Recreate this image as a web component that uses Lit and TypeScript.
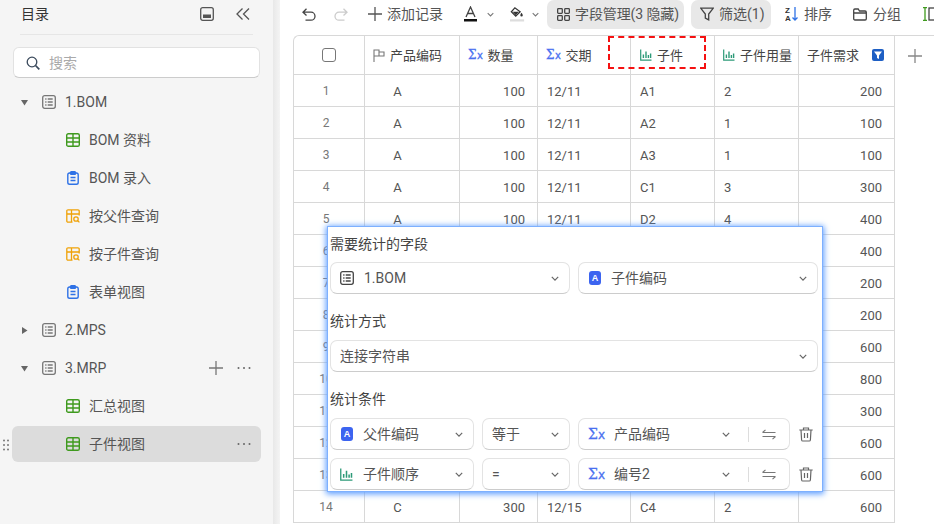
import { LitElement, html, css, nothing } from "lit";
import { customElement } from "lit/decorators.js";

const chev = html`<svg class="chev" width="8" height="5" viewBox="0 0 10 6"><path d="M1 1 5 5l4-4" fill="none" stroke="#666" stroke-width="1.500"/></svg>`;
const listIcon = (c = "#777") => html`<svg width="14" height="14" viewBox="0 0 14 14" fill="none" stroke=${c} stroke-width="1.300"><rect x=".7" y=".7" width="12.600" height="12.600" rx="2"/><path d="M3.200 4h1.300M5.700 4h5M3.200 7h1.300M5.700 7h5M3.200 10h1.300M5.700 10h5"/></svg>`;
const gridIcon = html`<svg width="14" height="14" viewBox="0 0 14 14" fill="none" stroke="#3f9a1e" stroke-width="1.400"><rect x=".7" y=".7" width="12.600" height="12.600" rx="1.600"/><path d="M.7 5h12.600M.7 9h12.600M7 .7v12.600"/></svg>`;
const clipIcon = html`<svg width="14" height="14" viewBox="0 0 14 14" fill="none" stroke="#2f72e6" stroke-width="1.400"><rect x="1.800" y="2" width="10.400" height="11.300" rx="1.800"/><rect x="4.500" y=".8" width="5" height="2.400" rx=".8" fill="#2f72e6"/><path d="M4.500 6.500h5M4.500 9.500h5"/></svg>`;
const queryIcon = html`<svg width="14" height="14" viewBox="0 0 14 14" fill="none" stroke="#efa208" stroke-width="1.300"><path d="M6.500 13.200H2A1.200 1.200 0 0 1 .8 12V2A1.200 1.200 0 0 1 2 .8h10A1.200 1.200 0 0 1 13.200 2v4.500M.8 5h12.400M5.500 .8v12.400"/><circle cx="10" cy="10" r="2.200"/><path d="m11.600 11.600 1.800 1.800"/></svg>`;
const sigma = html`<span class="sigma">Σ<i>x</i></span>`;
const barIcon = (s = 12) => html`<svg width=${s} height=${s} viewBox="0 0 12 12" fill="none" stroke="#2d9a78" stroke-width="1.200"><path d="M.7 .5v10.700h10.800"/><path d="M3.400 9V5.500M6 9V2.500M8.400 9V6M10.600 9V4.500" stroke-width="1.400"/></svg>`;
const aIcon = html`<span class="a-icon">A</span>`;
const trash = html`<svg width="14" height="15" viewBox="0 0 14 15" fill="none" stroke="#666" stroke-width="1.200"><path d="M.3 3h13.400M4.500 3V1h5v2M2 3l.6 10a1.200 1.200 0 0 0 1.200 1h6.400a1.200 1.200 0 0 0 1.200-1L12 3M5.500 6v5M8.500 6v5"/></svg>`;
const swap = html`<svg width="14" height="11" viewBox="0 0 14 11" fill="none" stroke="#777" stroke-width="1.100"><path d="M.5 3.500h13M.5 3.500 3.500.8M13.500 7.500H.5M13.500 7.500l-3 2.700"/></svg>`;
const dots = html`<svg width="14" height="4" viewBox="0 0 14 4" fill="#666"><circle cx="1.500" cy="2" r="1"/><circle cx="7" cy="2" r="1"/><circle cx="12.500" cy="2" r="1"/></svg>`;

const rows: [string, string, string, string, string, string, string][] = [
  ["1", "A", "100", "12/11", "A1", "2", "200"],
  ["2", "A", "100", "12/11", "A2", "1", "100"],
  ["3", "A", "100", "12/11", "A3", "1", "100"],
  ["4", "A", "100", "12/11", "C1", "3", "300"],
  ["5", "A", "100", "12/11", "D2", "4", "400"],
  ["6", "B", "200", "12/13", "A1", "2", "400"],
  ["7", "B", "200", "12/13", "A2", "1", "200"],
  ["8", "B", "200", "12/13", "B1", "1", "200"],
  ["9", "B", "200", "12/13", "B2", "3", "600"],
  ["10", "B", "200", "12/13", "C1", "4", "800"],
  ["11", "C", "300", "12/15", "C2", "1", "300"],
  ["12", "C", "300", "12/15", "C3", "2", "600"],
  ["13", "C", "300", "12/15", "D1", "2", "600"],
  ["14", "C", "300", "12/15", "C4", "2", "600"],
];

const ascii = (s: string) => /^[\x00-\x7f]+$/.test(s);

@customElement("app-root")
export class AppRoot extends LitElement {
  static styles = css`
    :host { display: flex; width: 934px; height: 524px; overflow: hidden; position: relative; background: #fff;
      font: 14px Roboto, "Noto Sans CJK SC", sans-serif; color: #444; }
    svg { display: block; flex: none; }
    .up { padding-bottom: 2px; }
    .side { width: 273px; flex: none; background: #f5f5f5; box-sizing: border-box; }
    .strip { width: 7px; flex: none; background: linear-gradient(90deg, #e8e8e8, #f4f4f4); margin-right: 13px; }
    .side-head { display: flex; align-items: center; margin: 0 20px; border-bottom: 1px solid #e6e6e6; color: #333; padding-left: 1px; padding-bottom: 6px; box-sizing: border-box; height: 35px; }
    .side-head .t { flex: 1; }
    .gap36 { width: 22px; }
    .search { margin: 12px 13px 6px; height: 31px; background: #fff; border: 1px solid #e2e2e2; border-bottom-color: #ccc; border-radius: 6px; display: flex; align-items: center; gap: 9px; padding-left: 12px; box-sizing: border-box; color: #aaa; }
    .tree { display: flex; flex-direction: column; gap: 2px; margin: 0 12px; position: relative; }
    .node { height: 36px; display: flex; align-items: center; border-radius: 6px; padding-right: 10px; color: #555; }
    .node.active { background: #dcdcdc; }
    .arrow { width: 30px; display: flex; padding-left: 9px; box-sizing: border-box; flex: none; }
    .node.l2 { padding-left: 54px; }
    .node .lbl { margin-left: 9px; flex: 1; }
    .node svg + svg { margin-left: 14px; }
    .grip { position: absolute; left: -9px; bottom: 11px; }

    .main { flex: 1; min-width: 0; display: flex; flex-direction: column; }
    .tools { height: 28px; margin-bottom: 7px; display: flex; align-items: center; white-space: nowrap; color: #555; }
    .tool { display: flex; align-items: center; gap: 5px; flex: none; }
    .pill { height: 29px; background: #e8e8e8; border-radius: 7px; box-sizing: border-box; }
    .p1 { padding: 0 6px 0 10px; gap: 5px; margin-left: 8px; width: 137px; letter-spacing: -.1px; }
    .p2 { padding: 0 8px 0 9px; margin-left: 7px; width: 80px; }

    .table { display: grid; grid-template-columns: 71px 95px 78px 93px 84px 84px 96px 39px; border-left: 1px solid #d8d8d8; border-top: 1px solid #d8d8d8; border-top-left-radius: 6px; width: 641px; font-size: 13px; }
    .c { height: 32px; box-sizing: border-box; border-right: 1px solid #d8d8d8; border-bottom: 1px solid #d8d8d8; display: flex; align-items: center; padding: 2px 9px 0; color: #555; white-space: nowrap; }
    .h { height: 39px; color: #444; padding: 0 0 0 8px; gap: 5px; }
    .c.num { justify-content: flex-end; padding-right: 12px; }
    .c.idx { justify-content: center; color: #777; font-size: 12px; padding: 0 6px 0 0; }
    .c.mid { justify-content: center; padding-right: 38px; }
    .h.box { justify-content: center; padding: 0; }
    .h.last { border-right: 0; border-bottom: 0; justify-content: center; padding: 0; }
    .blank { height: 32px; }
    .check { width: 12px; height: 12px; border: 1px solid #777; border-radius: 3px; }
    .sigma { color: #4a70f0; font-family: "DejaVu Serif", serif; font-size: 12px; display: inline-flex; align-items: baseline; letter-spacing: -.5px; line-height: 1; flex: none; -webkit-text-stroke: .3px #4a70f0; }
    .sigma i { font-style: normal; font-size: 10px; font-family: "DejaVu Sans", sans-serif; margin-left: 1px; }
    .fbadge { width: 12px; height: 12px; background: #1e5fc4; border-radius: 2px; display: flex; align-items: center; justify-content: center; margin-left: 8px; }
    .a-icon { width: 12px; height: 14px; margin-left: 1px; background: #3c64f0; color: #fff; border-radius: 3px; font: 700 9px "Liberation Sans", sans-serif; display: inline-flex; align-items: center; justify-content: center; flex: none; }

    .dash { position: absolute; left: 608px; top: 36px; width: 98px; height: 33px; box-sizing: border-box; border: 2px dashed #f51111; }
    .dlg { position: absolute; left: 328px; top: 227px; width: 494px; height: 264px; box-sizing: border-box; background: #fff; box-shadow: 0 0 0 1px #7db0ff, 0 1px 6px 2px #5c9dff; padding: 7px 4px 0 2px; color: #444; }
    .lab { height: 20px; line-height: 20px; }
    .sel { height: 32px; box-sizing: border-box; border: 1px solid #e3e3e3; border-bottom-color: #ccc; border-radius: 7px; display: flex; align-items: center; padding: 0 10px 0 9px; gap: 10px; min-width: 0; color: #555; }
    .sel .g { flex: 1; white-space: nowrap; }
    .sel .sigma { font-size: 14px; letter-spacing: -1px; }
    .sel .sigma i { font-size: 12px; }
    .sel.wide { padding-right: 13px; }
    .sel.wide .sep { width: 1px; height: 15px; background: #ddd; flex: none; margin-left: 8px; margin-right: 3px; }
    .row2 { display: grid; grid-template-columns: 240px 240px; gap: 8px; margin: 8px 0 17px; }
    .row1 { margin: 9px 0 17px; }
    .cond { display: grid; grid-template-columns: 144px 88px 212px 14px; column-gap: 8px; margin-top: 9px; align-items: center; }
    .cond + .cond { margin-top: 8px; }
    .trash { display: flex; justify-content: center; margin-left: 1px; }
  `;

  private node(label: string, icon: unknown, opts: { arrow?: string; l2?: boolean; active?: boolean; extra?: unknown } = {}) {
    return html`<div class="node ${opts.l2 ? "l2" : ""} ${opts.active ? "active" : ""}">
      ${opts.arrow ? html`<span class="arrow"><svg width="7" height="7" viewBox="0 0 7 7" fill="#666"><path d=${opts.arrow === "d" ? "M0 1h7L3.500 6.500z" : "M1 0l5.500 3.500L1 7z"} /></svg></span>` : nothing}
      ${icon}<span class="lbl ${ascii(label) ? "" : "up"}">${label}</span>${opts.extra ?? nothing}
    </div>`;
  }

  private select(icon: unknown, label: string) {
    return html`<div class="sel">${icon ?? nothing}<span class="g ${ascii(label) ? "" : "up"}">${label}</span>${chev}</div>`;
  }

  private cond(icon: unknown, a: string, b: string, c: string) {
    return html`<div class="cond">
      ${this.select(icon, a)}
      ${this.select(null, b)}
      <div class="sel wide">${sigma}<span class="g up">${c}</span>${chev}<span class="sep"></span>${swap}</div>
      <div class="trash">${trash}</div>
    </div>`;
  }

  render() {
    const plus = (s: number, c = "#555") => html`<svg width=${s} height=${s} viewBox="0 0 14 14" stroke=${c} stroke-width="1.300"><path d="M7 0v14M0 7h14"/></svg>`;
    const smallChev = html`<svg class="chev" width="7" height="5" viewBox="0 0 10 6"><path d="M1 1 5 5l4-4" fill="none" stroke="#777" stroke-width="1.500"/></svg>`;
    return html`
      <aside class="side">
        <div class="side-head">
          <span class="t up">目录</span>
          <svg width="14" height="14" viewBox="0 0 14 14" fill="none" stroke="#555" stroke-width="1.300"><rect x=".7" y=".7" width="12.600" height="12.600" rx="2"/><rect x="3" y="7.500" width="8" height="3.500" fill="#555" stroke="none"/></svg>
          <span class="gap36"></span>
          <svg style="margin-right:3px" width="14" height="12" viewBox="0 0 14 12" fill="none" stroke="#555" stroke-width="1.300"><path d="M6.500.5 1 6l5.500 5.500M13 .5 7.500 6l5.500 5.500"/></svg>
        </div>
        <div class="search">
          <svg width="14" height="14" viewBox="0 0 14 14" fill="none" stroke="#3b4a5c" stroke-width="1.300"><circle cx="6" cy="6" r="4.800"/><path d="m9.500 9.500 3.800 3.800" stroke-width="1.700"/></svg>
          <span class="up">搜索</span>
        </div>
        <div class="tree">
          ${this.node("1.BOM", listIcon(), { arrow: "d" })}
          ${this.node("BOM 资料", gridIcon, { l2: true })}
          ${this.node("BOM 录入", clipIcon, { l2: true })}
          ${this.node("按父件查询", queryIcon, { l2: true })}
          ${this.node("按子件查询", queryIcon, { l2: true })}
          ${this.node("表单视图", clipIcon, { l2: true })}
          ${this.node("2.MPS", listIcon(), { arrow: "r" })}
          ${this.node("3.MRP", listIcon(), { arrow: "d", extra: html`${plus(14, "#777")}${dots}` })}
          ${this.node("汇总视图", gridIcon, { l2: true })}
          ${this.node("子件视图", gridIcon, { l2: true, active: true, extra: dots })}
          <svg class="grip" width="6" height="12" viewBox="0 0 6 12" fill="#777"><circle cx="1" cy="1.500" r="1"/><circle cx="5" cy="1.500" r="1"/><circle cx="1" cy="6" r="1"/><circle cx="5" cy="6" r="1"/><circle cx="1" cy="10.500" r="1"/><circle cx="5" cy="10.500" r="1"/></svg>
        </div>
      </aside>
      <div class="strip"></div>
      <main class="main">
        <div class="tools">
          <svg style="margin-left:9px" width="14" height="13" viewBox="0 0 14 13" fill="none" stroke="#444" stroke-width="1.300"><path d="M4.500.8 1 4.200l3.500 3.300M1 4.200h8a4 4 0 0 1 0 8H3.500"/></svg>
          <svg style="margin-left:18px" width="14" height="13" viewBox="0 0 14 13" fill="none" stroke="#ccc" stroke-width="1.300"><path d="M9.500.8 13 4.200 9.500 7.500M13 4.200H5a4 4 0 0 0 0 8h5.500"/></svg>
          <span class="tool" style="margin-left:20px">${plus(14)}<span class="up">添加记录</span></span>
          <svg style="margin-left:21px" width="13" height="16" viewBox="0 0 13 16" fill="none"><path d="M2 11 6.500 1 11 11M3.500 7.500h6" stroke="#444" stroke-width="1.300"/><rect x="0" y="13" width="13" height="2.500" fill="#111"/></svg>
          <span style="margin-left:10px">${smallChev}</span>
          <svg style="margin-left:16px" width="15" height="18" viewBox="0 0 17 18" fill="none"><path d="M5.500 2 1.500 6.500 6.500 11.500 11.500 6.500z" stroke="#333" stroke-width="1.400"/><path d="M3 6.500h7l-3.500 4z" fill="#333"/><path d="M13 7.500c1 1.500 1.500 2.200 1.500 3a1.400 1.400 0 0 1-2.800 0c0-.8.500-1.500 1.300-3z" fill="#333"/><rect x="0" y="15" width="16" height="2.500" fill="#ddd"/></svg>
          <span style="margin-left:7px">${smallChev}</span>
          <span class="tool pill p1"><svg width="13" height="13" viewBox="0 0 14 14" fill="none" stroke="#444" stroke-width="1.400"><rect x=".7" y=".7" width="5" height="5" rx=".8"/><rect x="8.300" y=".7" width="5" height="5" rx=".8"/><rect x=".7" y="8.300" width="5" height="5" rx=".8"/><rect x="8.300" y="8.300" width="5" height="5" rx=".8"/></svg><span class="up">字段管理(3 隐藏)</span></span>
          <span class="tool pill p2"><svg width="14" height="14" viewBox="0 0 14 14" fill="none" stroke="#444" stroke-width="1.300"><path d="M.7 1.200h12.600L8.700 7v5.800l-3.400-1.800V7z"/></svg><span class="up">筛选(1)</span></span>
          <span class="tool" style="margin-left:14px"><svg width="14" height="16" viewBox="0 0 14 16" fill="none"><text x="0" y="7" font-size="8" font-weight="700" fill="#333" font-family="Liberation Sans">Z</text><text x="0" y="15" font-size="8" font-weight="700" fill="#333" font-family="Liberation Sans">A</text><path d="M10 1v13M7.500 11.500 10 14l2.500-2.500" stroke="#2f72e6" stroke-width="1.300"/></svg><span class="up">排序</span></span>
          <span class="tool" style="margin-left:21px;gap:6px"><svg width="14" height="13" viewBox="0 0 14 13" fill="none" stroke="#444" stroke-width="1.300"><path d="M.7 2.200A1.200 1.200 0 0 1 1.900 1h3.300l1.300 2h5.600a1.200 1.200 0 0 1 1.200 1.200v6.600a1.200 1.200 0 0 1-1.200 1.200H1.900a1.200 1.200 0 0 1-1.200-1.200zM.7 5h12.600"/></svg><span class="up">分组</span></span>
          <svg style="margin-left:21px" width="16" height="14" viewBox="0 0 16 14" fill="none"><path d="M1 .7h4M1 13.300h4M3 .7v12.600" stroke="#3f9a1e" stroke-width="1.300"/><rect x="7" y="1" width="8" height="12" stroke="#444" stroke-width="1.300"/></svg>
        </div>
        <div class="table">
          <div class="c h box"><span class="check"></span></div>
          <div class="c h"><svg width="12" height="13" viewBox="0 0 12 13" fill="none" stroke="#777" stroke-width="1.100"><path d="M1 13V1h5v6H1M6 3h5v4H6"/></svg><span class="up">产品编码</span></div>
          <div class="c h">${sigma}<span class="up">数量</span></div>
          <div class="c h">${sigma}<span class="up">交期</span></div>
          <div class="c h" style="padding-left:9px">${barIcon()}<span class="up">子件</span></div>
          <div class="c h">${barIcon()}<span class="up">子件用量</span></div>
          <div class="c h"><span class="up">子件需求</span><span class="fbadge"><svg width="8" height="8" viewBox="0 0 8 8" fill="#fff"><path d="M0 .5h8L5 4.500V8L3 7V4.500z"/></svg></span></div>
          <div class="c h last">${plus(14, "#888")}</div>
          ${rows.map(
            (r) => html`
              <div class="c idx">${r[0]}</div>
              <div class="c mid">${r[1]}</div>
              <div class="c num">${r[2]}</div>
              <div class="c">${r[3]}</div>
              <div class="c">${r[4]}</div>
              <div class="c">${r[5]}</div>
              <div class="c num">${r[6]}</div>
              <div class="blank"></div>
            `
          )}
        </div>
      </main>
      <div class="dash"></div>
      <section class="dlg">
        <div class="lab">需要统计的字段</div>
        <div class="row2">
          ${this.select(listIcon("#444"), "1.BOM")}
          ${this.select(aIcon, "子件编码")}
        </div>
        <div class="lab">统计方式</div>
        <div class="row1">${this.select(null, "连接字符串")}</div>
        <div class="lab">统计条件</div>
        ${this.cond(aIcon, "父件编码", "等于", "产品编码")}
        ${this.cond(barIcon(13), "子件顺序", "=", "编号2")}
      </section>
    `;
  }
}
